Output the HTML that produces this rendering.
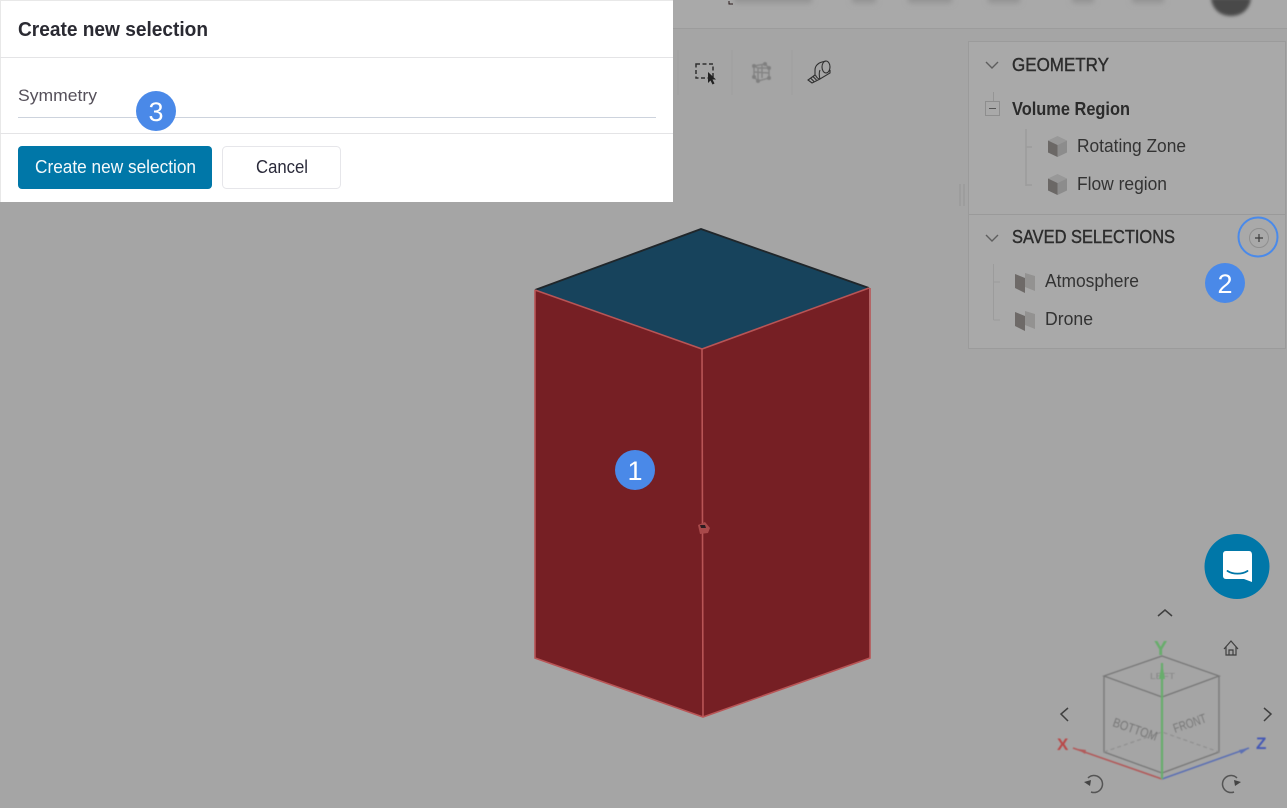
<!DOCTYPE html>
<html>
<head>
<meta charset="utf-8">
<style>
html,body{margin:0;padding:0;width:1287px;height:808px;overflow:hidden;background:#a5a5a5}
svg{position:absolute;left:0;top:0;display:block}
text{font-family:"Liberation Sans",sans-serif}
</style>
</head>
<body>
<svg width="1287" height="808" viewBox="0 0 1287 808" xmlns="http://www.w3.org/2000/svg">
<defs>
<filter id="b" x="-30%" y="-150%" width="160%" height="400%"><feGaussianBlur stdDeviation="3"/></filter>
<filter id="a" x="-30%" y="-30%" width="160%" height="160%"><feGaussianBlur stdDeviation="1.500"/></filter>
<filter id="s" x="-10%" y="-10%" width="120%" height="120%"><feGaussianBlur stdDeviation="0.45"/></filter>
<g id="cube">
<path d="M9.500 0L19 4.500L9.500 9L0 4.500Z" fill="#989898"/>
<path d="M0 4.500L9.500 9V21L0 16.500Z" fill="#6b6866"/>
<path d="M9.500 9L19 4.500V16.500L9.500 21Z" fill="#8c8c8c"/>
</g>
<g id="plate">
<path d="M10 1L20 4V19L10 15Z" fill="#939291"/>
<path d="M0 2L10 6V21L0 16Z" fill="#6e6a68"/>
</g>
</defs>

<rect width="1287" height="808" fill="#a5a5a5"/>

<!-- top bar -->
<rect x="673" y="0" width="614" height="28" fill="#a9a9a9"/>
<rect x="673" y="28" width="614" height="1" fill="#9c9c9c"/>
<g fill="#939393" filter="url(#b)">
<rect x="734" y="-6" width="78" height="9"/>
<rect x="852" y="-6" width="24" height="9"/>
<rect x="908" y="-6" width="44" height="9"/>
<rect x="988" y="-6" width="32" height="9"/>
<rect x="1072" y="-6" width="22" height="9"/>
<rect x="1132" y="-6" width="32" height="9"/>
</g>
<path d="M1211 -2H1251C1250 9 1242 16 1231 16C1220 16 1212 9 1211 -2Z" fill="#4a4a4a" filter="url(#a)"/>
<path d="M729 1V4H733" fill="none" stroke="#2a1a1a" stroke-width="1"/>

<!-- toolbar -->
<g stroke="#9e9e9e" stroke-width="1">
<path d="M678 50V95M732 50V95M792 50V95"/>
</g>
<rect x="696" y="64" width="17" height="14" fill="none" stroke="#303030" stroke-width="1.500" stroke-dasharray="4 2.500"/>
<path d="M708 72L708 83L710.500 80.500L712.500 84.500L714.500 83.500L712.500 79.500L716 79.500Z" fill="#222"/>
<g filter="url(#s)">
<g fill="none" stroke="#838383" stroke-width="1.400">
<path d="M754 66L765 64L769 68V78L758 81L754 77Z"/>
<path d="M758 68V81M754 66L758 68L769 68M762 64.500V78M754 72L769 73"/>
</g>
<g fill="#808080"><circle cx="754" cy="66" r="2"/><circle cx="765" cy="64" r="2"/><circle cx="769" cy="68" r="2"/><circle cx="769" cy="78" r="2"/><circle cx="758" cy="81" r="2"/><circle cx="754" cy="77" r="2"/></g>
</g>
<g fill="none" stroke="#2f2f2f" stroke-width="1.100">
<path d="M815 75V70C815 66 818 63 822 62L826 61"/>
<ellipse cx="826" cy="67" rx="4" ry="6"/>
<path d="M830 70V73L820 79C818 79 816 77 815.500 75"/>
<path d="M820 70C819 72 819 76 820 79"/>
<path d="M815 75L808 80L812 83L820 79"/>
<path d="M810.500 78L814 81.500M813 76.500L816.500 80"/>
</g>

<!-- 3D box -->
<path d="M535 290L702 349L703 717L535 658Z" fill="#761f24"/>
<path d="M702 349L869 288L870 658L703 717Z" fill="#761f24"/>
<path d="M701 229L869 288L702 349L535 290Z" fill="#17435c"/>
<path d="M535 290L701 229L869 288" fill="none" stroke="#20262a" stroke-width="1.800"/>
<path d="M535 290L702 349L869 288M702 349L703 717M535 290V658L703 717L870 658V288" fill="none" stroke="#b85556" stroke-width="1.600"/>
<path d="M698 525L705 522L710 528L708 533L700 534Z" fill="#a8494a"/>
<path d="M700 525L705 525L706 528L701 528Z" fill="#2e1c20"/>

<!-- right panel -->
<rect x="968.500" y="41.500" width="317" height="307" fill="#a9a9a9" stroke="#9b9b9b"/>
<rect x="969" y="214" width="316" height="1" fill="#9a9a9a"/>
<path d="M960 184V206M964 184V206" stroke="#959595" stroke-width="1"/>

<path d="M986 62L992 68L998 62" fill="none" stroke="#5e5e5e" stroke-width="1.400"/>
<text x="1012" y="71" font-size="18" textLength="97" lengthAdjust="spacingAndGlyphs" fill="#2c2c2c" stroke="#2c2c2c" stroke-width=".4">GEOMETRY</text>
<path d="M993.500 92V101" stroke="#959595"/>
<rect x="985.500" y="101.500" width="14" height="14" fill="none" stroke="#8e8e8e"/>
<path d="M989 108.500H996" stroke="#555"/>
<text x="1012" y="115" font-size="18" font-weight="bold" textLength="118" lengthAdjust="spacingAndGlyphs" fill="#2b2b2b">Volume Region</text>
<path d="M1026 129V186M1026 147H1032M1026 185H1032" stroke="#9c9c9c" stroke-width="1.500" fill="none"/>
<use href="#cube" x="1048" y="136"/>
<use href="#cube" x="1048" y="174"/>
<text x="1077" y="152" font-size="18" textLength="109" lengthAdjust="spacingAndGlyphs" fill="#333">Rotating Zone</text>
<text x="1077" y="190" font-size="18" textLength="90" lengthAdjust="spacingAndGlyphs" fill="#333">Flow region</text>

<path d="M986 235L992 241L998 235" fill="none" stroke="#5e5e5e" stroke-width="1.400"/>
<text x="1012" y="243" font-size="18" textLength="163" lengthAdjust="spacingAndGlyphs" fill="#2c2c2c" stroke="#2c2c2c" stroke-width=".4">SAVED SELECTIONS</text>
<circle cx="1258" cy="237" r="19.500" fill="none" stroke="#4a8aea" stroke-width="2"/>
<circle cx="1259" cy="238" r="9.500" fill="none" stroke="#8f8f8f"/>
<path d="M1255 238H1263M1259 234V242" stroke="#3c3c3c" stroke-width="1.200"/>
<path d="M993.500 264V320M993.500 282H1000M993.500 320H1000" stroke="#9c9c9c" fill="none"/>
<use href="#plate" x="1015" y="272"/>
<use href="#plate" x="1015" y="310"/>
<text x="1045" y="287" font-size="18" textLength="94" lengthAdjust="spacingAndGlyphs" fill="#333">Atmosphere</text>
<text x="1045" y="325" font-size="18" textLength="48" lengthAdjust="spacingAndGlyphs" fill="#333">Drone</text>

<!-- modal -->
<rect x="0" y="0" width="673" height="202" fill="#ffffff"/>
<rect x="0" y="0" width="673" height="1" fill="#e8e8e8"/>
<rect x="0" y="0" width="1" height="202" fill="#e8e8e8"/>
<rect x="0" y="57" width="673" height="1" fill="#e4e4e6"/>
<rect x="0" y="133" width="673" height="1" fill="#e4e4e6"/>
<text x="18" y="36" font-size="20" font-weight="bold" textLength="190" lengthAdjust="spacingAndGlyphs" fill="#2a2a32">Create new selection</text>
<text x="18" y="101" font-size="17" textLength="79" lengthAdjust="spacingAndGlyphs" fill="#55505a">Symmetry</text>
<rect x="18" y="117" width="638" height="1" fill="#cdd3dd"/>
<rect x="18" y="146" width="194" height="43" rx="4" fill="#0077a8"/>
<text x="35" y="173" font-size="18" textLength="161" lengthAdjust="spacingAndGlyphs" fill="#f4f9fb">Create new selection</text>
<rect x="222.500" y="146.500" width="118" height="42" rx="4" fill="#fff" stroke="#e6e6ea"/>
<text x="256" y="173" font-size="18" textLength="52" lengthAdjust="spacingAndGlyphs" fill="#2a2a3a">Cancel</text>

<!-- chat -->
<circle cx="1237" cy="566.500" r="32.500" fill="#0077a8"/>
<path d="M1226 551H1249C1251 551 1252 552.500 1252 555V582L1244 579H1226C1224 579 1223 577.500 1223 576V554C1223 552.500 1224 551 1226 551Z" fill="#fff"/>
<path d="M1227.500 571C1233 574.500 1242 574.500 1247.500 571" fill="none" stroke="#0077a8" stroke-width="1.800" stroke-linecap="round"/>

<!-- gizmo -->
<g fill="none" stroke="#3f3f3f" stroke-width="1.500">
<path d="M1158 616L1165 610L1172 616"/>
<path d="M1068 708L1061 714L1068 721"/>
<path d="M1264 708L1271 714L1264 721"/>
<path d="M1224 649L1231 641L1238 649M1226 647V655H1236V647M1229 655V650H1233V655" stroke-width="1.200"/>
<path d="M1088 778A8.500 8.500 0 1 1 1091 792" stroke="#555"/>
<path d="M1237 778A8.500 8.500 0 1 0 1234 792" stroke="#555"/>
</g>
<path d="M1084 782L1091 780L1090 786Z" fill="#444"/>
<path d="M1241 782L1234 780L1235 786Z" fill="#444"/>

<g filter="url(#s)">
<g fill="none" stroke="#777" stroke-width="1.300">
<path d="M1162 656L1219 676L1162 697L1104 676Z"/>
<path d="M1104 676V752L1162 773L1219 752V676M1162 697V773"/>
</g>
<path d="M1104 752L1162 732L1219 752" fill="none" stroke="#8f8f8f" stroke-width="1.200" stroke-dasharray="4 3"/>
<text x="0" y="0" font-size="13" fill="#777" transform="translate(1112 726) rotate(19)" textLength="46" lengthAdjust="spacingAndGlyphs">BOTTOM</text>
<text x="0" y="0" font-size="13" fill="#777" transform="translate(1175 733) rotate(-19)" textLength="34" lengthAdjust="spacingAndGlyphs">FRONT</text>
<text x="0" y="0" font-size="8" fill="#858585" transform="translate(1150 679)" textLength="25" lengthAdjust="spacingAndGlyphs">LEFT</text>

<path d="M1162 779L1073 748" stroke="#b25a5a" stroke-width="1.600"/>
<path d="M1162 779L1249 748" stroke="#5c70b4" stroke-width="1.600"/>
<path d="M1162 779V663" stroke="#68ad6c" stroke-width="2.200"/>
<path d="M1162 663L1159 679H1165Z" fill="#68ad6c"/>
<path d="M1078 749L1086 750L1085 754Z" fill="#b25a5a"/>
<path d="M1249 748L1239 750L1241 754Z" fill="#5c70b4"/>
<text x="1154" y="655" font-size="20" font-weight="bold" fill="#68ad6c">Y</text>
<text x="1057" y="750" font-size="17" font-weight="bold" fill="#b94a4a">X</text>
<text x="1256" y="749" font-size="17" font-weight="bold" fill="#4458b5">Z</text>
</g>

<!-- badges -->
<g fill="#4a89e8">
<circle cx="635" cy="470" r="20"/>
<circle cx="1225" cy="283" r="20"/>
<circle cx="156" cy="111" r="20"/>
</g>
<g fill="#fff" text-anchor="middle">
<text x="635" y="480" style="font-size:27px">1</text>
<text x="1225" y="293" style="font-size:27px">2</text>
<text x="156" y="121" style="font-size:27px">3</text>
</g>
</svg>
</body>
</html>
